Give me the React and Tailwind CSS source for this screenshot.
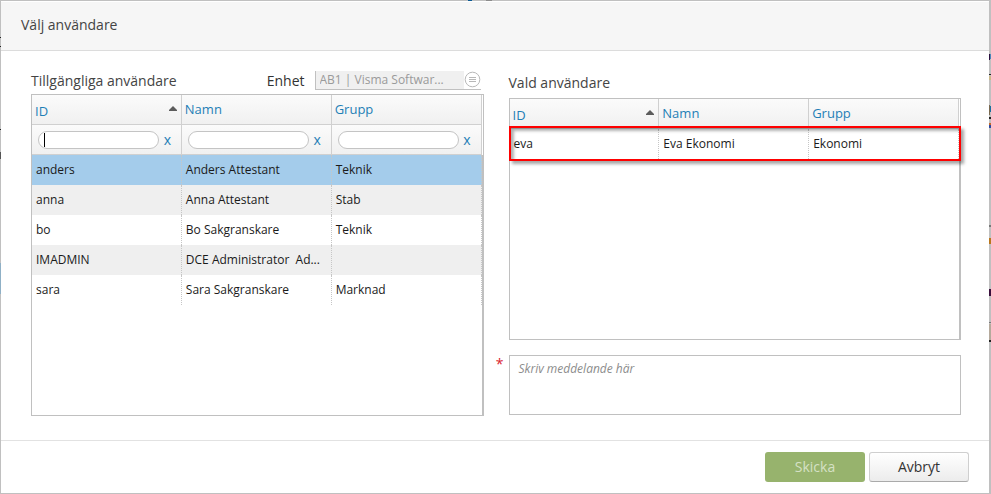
import React from 'react';

const available = [
  ['anders', 'Anders Attestant', 'Teknik'],
  ['anna', 'Anna Attestant', 'Stab'],
  ['bo', 'Bo Sakgranskare', 'Teknik'],
  ['IMADMIN', 'DCE Administrator  Ad...', ''],
  ['sara', 'Sara Sakgranskare', 'Marknad'],
];

const chosen = [['eva', 'Eva Ekonomi', 'Ekonomi']];

const columns = ['ID', 'Namn', 'Grupp'];

function ColumnHeads() {
  return (
    <tr className="h-[30px] bg-gradient-to-b from-[#fbfbfb] to-[#f0f0f0]">
      {columns.map((name) => (
        <th key={name} scope="col" className="border-r border-b border-[#d0d0d0] p-0 text-left font-normal">
          <button type="button" className={`flex w-full items-center justify-between pr-1 pb-0.5 pl-[3px] text-[13px] leading-5 text-[#1f7fb6] ${name === 'ID' ? 'pt-1' : ''}`}>
            {name}
            {name === 'ID' && (
              <svg viewBox="0 0 8 5" className="mb-1 h-[5px] w-2" aria-hidden="true">
                <path d="M4 0L8 4V5H0V4Z" fill="#5c5c5c" />
              </svg>
            )}
          </button>
        </th>
      ))}
    </tr>
  );
}

function FilterRow() {
  return (
    <tr className="h-[30px] bg-gradient-to-b from-[#fbfbfb] to-[#f0f0f0]">
      {columns.map((name) => (
        <td key={name} className="border-r border-b border-[#d0d0d0] p-0">
          <div className="flex items-center gap-1 pr-[9px] pl-[6px]">
            <div className="flex h-[18px] min-w-0 flex-1 items-center rounded-full border border-[#c4c4c4] bg-white px-[5px]">
              {name === 'ID' && <span className="h-[14px] w-px shrink-0 bg-black" />}
              <input type="text" aria-label={`Filtrera ${name}`} className="h-4 w-full min-w-0 bg-transparent text-xs outline-none" />
            </div>
            <button type="button" aria-label={`Rensa ${name}`} className="w-[9px] text-center leading-4 text-[#1f7fb6]">
              x
            </button>
          </div>
        </td>
      ))}
    </tr>
  );
}

function UserTable({ label, users, filter, selected }) {
  return (
    <table aria-label={label} className="w-full table-fixed border-separate border-spacing-0 text-sm">
      <thead>
        <ColumnHeads />
        {filter && <FilterRow />}
      </thead>
      <tbody className="text-xs text-[#1a1a1a]">
        {users.map((user, i) => (
          <tr key={user[0]} className={`h-[30px] ${user[0] === selected ? 'bg-[#a4cceb]' : i % 2 ? 'bg-[#efefef]' : 'bg-white'}`}>
            {user.map((value, j) => (
              <td key={j} className="truncate border-r border-dotted border-[#c6c6c6] py-0 pr-2 pl-1 whitespace-pre">
                {value}
              </td>
            ))}
          </tr>
        ))}
      </tbody>
    </table>
  );
}

/* Slivers of the dimmed page that stay visible beside the dialog. */
function PageBehind() {
  return (
    <>
      <svg viewBox="0 0 2 350" className="absolute top-0 right-0 h-[350px] w-0.5" shapeRendering="crispEdges" aria-hidden="true">
        <path d="M0 54H1V60H0Z" fill="#2c1040" />
        <path d="M1 54H2V59H1Z" fill="#4b86b8" />
        <path d="M0 74H2V75H0ZM0 117H2V119H0ZM0 340H2V342H0Z" fill="#222" />
        <path d="M0 76H2V80H0Z" fill="#cbb98a" />
        <path d="M0 105H1V115H0Z" fill="#7a6a50" />
        <path d="M1 106H2V112H1Z" fill="#1d6f9e" />
        <path d="M0 123H2V125H0Z" fill="#c46a2c" />
        <path d="M0 125H2V128H0Z" fill="#2f4aa0" />
        <path d="M0 225H2V227H0ZM0 322H2V323H0Z" fill="#777" />
        <path d="M0 238H2V244H0Z" fill="#b9771c" />
        <path d="M0 289H2V296H0Z" fill="#3a0f3c" />
        <path d="M0 324H2V340H0Z" fill="#b5aa9c" />
      </svg>
      <svg viewBox="0 0 24 1" className="absolute top-0 left-[468px] h-px w-6" shapeRendering="crispEdges" aria-hidden="true">
        <path d="M0 0H4V1H0Z" fill="#0b5a94" />
        <path d="M18 0H24V1H18Z" fill="#8c8c8c" />
      </svg>
      <svg viewBox="0 0 1 350" className="absolute top-0 left-0 h-[350px] w-px" shapeRendering="crispEdges" aria-hidden="true">
        <path d="M0 37H1V38H0ZM0 46H1V47H0ZM0 129H1V130H0Z" fill="#222" />
        <path d="M0 152H1V159H0Z" fill="#555" />
        <path d="M0 263H1V294H0Z" fill="#8fb0c6" />
      </svg>
    </>
  );
}

export default function App() {
  return (
    <div className="relative flex min-h-screen bg-[#c0c0c0] py-px pr-0.5 pl-px font-['Open_Sans','Noto_Sans',sans-serif] text-sm text-[#444]">
      <PageBehind />
      <div role="dialog" aria-labelledby="title" className="flex min-w-0 flex-1 flex-col bg-white">
        <header className="flex h-[50px] items-center border-t border-b border-t-white border-b-[#dcdcdc] bg-[#f6f6f6] pb-0.5 pl-5">
          <h1 id="title">Välj användare</h1>
        </header>

        <main className="grid flex-1 grid-cols-[minmax(0,1fr)_25px_minmax(0,1fr)] grid-rows-[auto_auto] content-start pt-5 pr-7 pb-6 pl-[30px]">
          <section className="row-span-2 flex flex-col">
            <div className="mb-1 flex h-[19px] items-center">
              <h2>Tillgängliga användare</h2>
              <label htmlFor="unit" className="ml-auto text-[#333]">
                Enhet
              </label>
              <div className="relative mr-[3px] ml-[10px] w-[166px]">
                <select id="unit" disabled className="block h-[19px] w-full appearance-none border border-t-0 border-[#c0c0c0] bg-[#f0f0f0] pr-5 pl-1 text-xs leading-4 text-[#9a9a9a] opacity-100">
                  <option>AB1 | Visma Softwar...</option>
                </select>
                <svg viewBox="0 0 17 18" className="pointer-events-none absolute top-0 right-0 h-[18px] w-[17px]" fill="none" stroke="#b8b8b8" aria-hidden="true">
                  <rect width="17" height="18" fill="#fff" stroke="none" />
                  <circle cx="8.5" cy="8.5" r="7.3" />
                  <path d="M5 6.5H12M5 8.5H12M5 10.5H12" />
                </svg>
              </div>
            </div>
            <div className="flex min-h-[322px] flex-1 border border-[#c0c0c0] bg-[linear-gradient(#fff_60px,#c0c0c0_60px)] pr-px">
              <div className="min-w-0 flex-1 bg-white">
                <UserTable label="Tillgängliga användare" users={available} filter selected="anders" />
              </div>
            </div>
          </section>

          <section className="col-start-3">
            <h2 className="mb-[3px] leading-6">Vald användare</h2>
            <div className="relative flex min-h-[242px] border border-[#c0c0c0] bg-[linear-gradient(#fff_30px,#c0c0c0_30px)] pr-px">
              <div className="min-w-0 flex-1 bg-white">
                <UserTable label="Vald användare" users={chosen} />
              </div>
              <div className="pointer-events-none absolute -inset-x-px top-[27px] h-[35px] border-2 border-[#f00] shadow-[3px_3px_3px_rgba(0,0,0,0.35),inset_3px_3px_3px_rgba(0,0,0,0.3)]" />
            </div>
          </section>

          <label htmlFor="message" aria-label="Meddelande" className="col-start-2 mt-[14px] pr-[5px] text-right leading-[18px] text-[#d9232e]">
            *
          </label>
          <textarea
            id="message"
            required
            placeholder="Skriv meddelande här"
            className="col-start-3 mt-[14px] block h-[60px] w-full resize-none border border-[#c0c0c0] bg-white px-[9px] py-1 text-xs leading-[18px] outline-none placeholder:text-[#8c8c8c] placeholder:italic"
          />
        </main>

        <footer className="flex justify-end gap-1 border-t border-[#e2e2e2] pt-[11px] pr-5 pb-[11px]">
          <button type="button" disabled className="h-[30px] w-[100px] rounded-[3px] bg-[#97b36d] text-[#d5e1c5]">
            Skicka
          </button>
          <button type="button" className="h-[30px] w-[100px] rounded-[3px] border border-[#cfcfcf] border-b-[#aaa] bg-gradient-to-b from-white to-[#ececec] text-[#333]">
            Avbryt
          </button>
        </footer>
      </div>
    </div>
  );
}
